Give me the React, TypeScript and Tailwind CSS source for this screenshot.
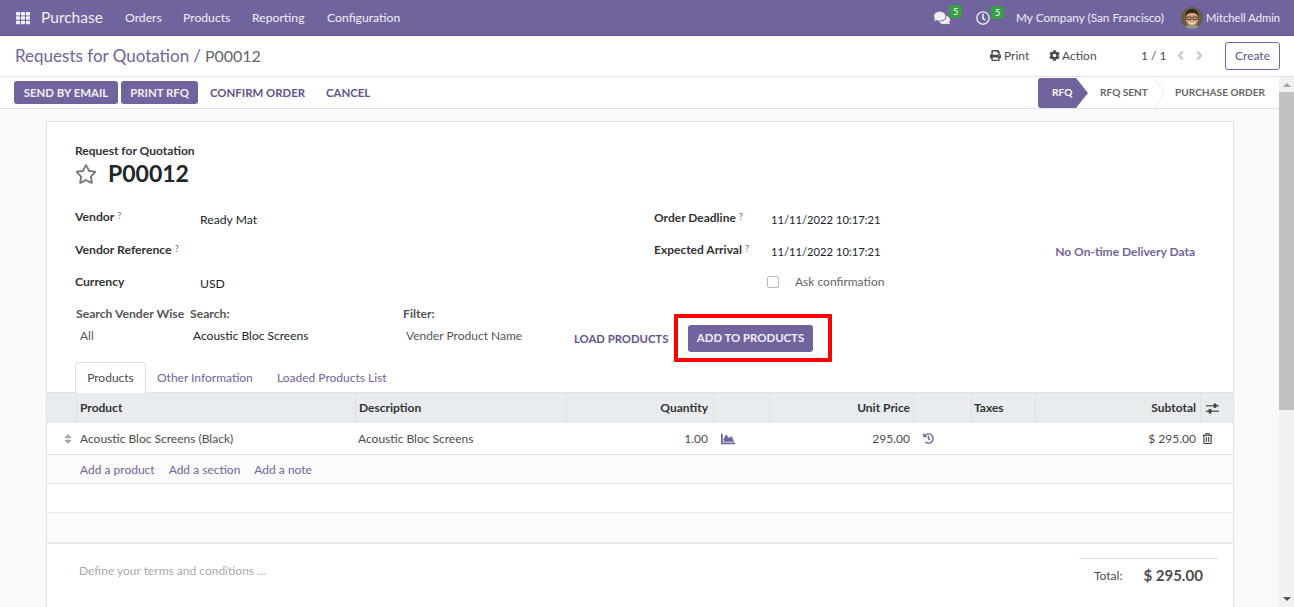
import { FaAngleLeft, FaAngleRight, FaChartArea, FaCog, FaComments, FaHistory, FaPrint, FaRegClock, FaRegStar, FaRegTrashAlt, FaSort, FaTh } from 'react-icons/fa'

const tableCols = 'grid grid-cols-[29px_279px_211px_147px_56px_144px_58px_64px_165px_33px]'

function Help() {
  return <sup className="ml-[3px] text-[9px] font-normal text-[#71639e] relative -top-[2px]">?</sup>
}

function Badge() {
  return (
    <span className="absolute -top-[5px] left-[15px] bg-[#3a9e46] text-white rounded-[2px] text-[9px] leading-[13px] w-[13px] text-center">5</span>
  )
}

function Avatar() {
  return (
    <svg width="22" height="22" viewBox="0 0 22 22" className="rounded-full">
      <rect width="22" height="22" fill="#6b5a45" />
      <ellipse cx="11" cy="12" rx="6" ry="7" fill="#d6a27c" />
      <path d="M4 10c0-6 4-8 7-8s7 2 7 8c-1-3-3-4-7-4s-6 1-7 4z" fill="#33261d" />
      <rect x="6" y="10" width="4" height="2.5" fill="none" stroke="#2a211c" strokeWidth="0.7" />
      <rect x="12" y="10" width="4" height="2.5" fill="none" stroke="#2a211c" strokeWidth="0.7" />
      <path d="M8 15.5c2 1.5 4 1.5 6 0" stroke="#fff" strokeWidth="1" fill="none" />
      <path d="M2 22c1-3 4-4 9-4s8 1 9 4z" fill="#8c9a8c" />
    </svg>
  )
}

function Chevron() {
  return (
    <svg width="10" height="30" viewBox="0 0 10 30" className="shrink-0">
      <path d="M0 0l9 15L0 30" fill="none" stroke="#e9ecef" />
    </svg>
  )
}

function Sliders() {
  return (
    <svg width="13" height="11" viewBox="0 0 13 11" fill="#444">
      <rect x="0" y="2.2" width="13" height="1.2" />
      <rect x="7.5" y="0.5" width="3" height="4.5" rx="1" />
      <rect x="0" y="7.6" width="13" height="1.2" />
      <rect x="2.5" y="6" width="3" height="4.5" rx="1" />
    </svg>
  )
}

export default function App() {
  return (
    <div className="w-[1294px] h-[607px] overflow-hidden flex flex-col bg-white text-[12px] text-[#4c4c4c] font-['Lato',sans-serif]">
      <nav className="h-9 shrink-0 bg-[#71639e] border-b border-[#645890] text-white/90 text-[12.2px] flex items-center pl-[16px] pr-[16px] pt-[1px]">
        <FaTh className="text-[14px] text-white/90" />
        <span className="ml-[11px] text-[15.5px] w-[62px]">Purchase</span>
        <span className="ml-[22px] w-[36px]">Orders</span>
        <span className="ml-[22px] w-[47px]">Products</span>
        <span className="ml-[22px] w-[53px]">Reporting</span>
        <span className="ml-[22px]">Configuration</span>
        <div className="ml-auto flex items-center">
          <span className="relative mr-[26px]"><FaComments className="text-[16px]" /><Badge /></span>
          <span className="relative mr-[26px]"><FaRegClock className="text-[14px]" /><Badge /></span>
          <span className="w-[148px] mr-[17px] whitespace-nowrap text-[11.8px]">My Company (San Francisco)</span>
          <Avatar />
          <span className="ml-[3px] w-[72px] whitespace-nowrap text-[11.2px]">Mitchell Admin</span>
        </div>
      </nav>

      <div className="h-[41px] shrink-0 border-b border-[#dee2e6] flex items-center pl-[15px] pr-[14px]">
        <span className="text-[17px] text-[#71639e]">Requests for Quotation</span>
        <span className="text-[17px] text-[#71639e] ml-[4px]">/</span>
        <span className="text-[16px] text-[#666] ml-[4px]">P00012</span>
        <div className="ml-auto -mt-[1px] flex items-center">
          <FaPrint className="text-[11px] mr-[3px]" />
          <span className="w-[27px]">Print</span>
          <FaCog className="text-[11px] ml-[18px] mr-[2px]" />
          <span className="w-[35px]">Action</span>
          <span className="ml-[44px] w-[22px] whitespace-nowrap">1 / 1</span>
          <FaAngleLeft className="ml-[10px] text-[15px] text-[#ccc]" />
          <FaAngleRight className="ml-[4px] text-[15px] text-[#ccc]" />
          <button className="ml-[18px] w-[55px] h-[28px] rounded-[3px] border border-[#71639e] text-[#5f5390]">Create</button>
        </div>
      </div>

      <div className="flex-1 min-h-0 flex">
        <div className="flex-1 min-w-0 flex flex-col">
          <div className="h-[32px] shrink-0 border-b border-[#dee2e6] flex items-center pl-[14px] pr-[14px]">
            <button className="h-[23px] w-[104px] bg-[#71639e] text-white/90 rounded-[3px] font-bold text-[11.4px]">SEND BY EMAIL</button>
            <button className="h-[23px] w-[77px] ml-[3px] bg-[#71639e] text-white/90 rounded-[3px] font-bold text-[11.4px]">PRINT RFQ</button>
            <span className="ml-[12px] w-[95px] text-[#5f5390] font-bold text-[11.4px] whitespace-nowrap">CONFIRM ORDER</span>
            <span className="ml-[21px] text-[#5f5390] font-bold text-[11.4px]">CANCEL</span>
            <div className="ml-auto flex items-center text-[10.1px] text-[#666] font-bold h-[30px] -mb-[1px]">
              <span className="w-[50px] h-[30px] bg-[#71639e] text-white flex items-center pl-[14px] rounded-l-[3px] [clip-path:polygon(0_0,38px_0,50px_50%,38px_100%,0_100%)]">RFQ</span>
              <span className="ml-[12px] w-[48px] whitespace-nowrap">RFQ SENT</span>
              <span className="ml-[7px]"><Chevron /></span>
              <span className="ml-[10px] w-[90px] whitespace-nowrap">PURCHASE ORDER</span>
            </div>
          </div>

          <main className="flex-1 min-h-0 bg-[#f8f9fb] overflow-hidden pt-[12px] pl-[46px]">
            <div className="w-[1188px] h-[600px] bg-white border border-[#dee2e6] pt-[21px]">
              <div className="pl-[28px] pr-[38px]">
                <div className="text-[12px] font-bold text-[#333] leading-[15px]">Request for Quotation</div>
                <div className="flex items-center h-[31px]">
                  <FaRegStar className="text-[22px] text-[#777]" />
                  <span className="ml-[11px] text-[23px] font-bold text-[#212529]">P00012</span>
                </div>

                <div className="mt-[15px] grid grid-cols-[125px_454px_117px_1fr] auto-rows-[32px] items-center text-[12.2px] text-[#212529]">
                  <span className="font-bold text-[#333] -mt-[5px]">Vendor<Help /></span>
                  <span>Ready Mat</span>
                  <span className="font-bold text-[#333] -mt-[5px] text-[12px]">Order Deadline<Help /></span>
                  <span className="text-[11.2px]">11/11/2022 10:17:21</span>
                  <span className="font-bold text-[#333] -mt-[3px] whitespace-nowrap">Vendor Reference<Help /></span>
                  <span />
                  <span className="font-bold text-[#333] -mt-[5px] text-[12px] whitespace-nowrap">Expected Arrival<Help /></span>
                  <div className="flex justify-between items-center">
                    <span className="text-[11.2px]">11/11/2022 10:17:21</span>
                    <span className="font-bold text-[#71639e] text-[12px]">No On-time Delivery Data</span>
                  </div>
                  <span className="font-bold text-[#333] -mt-[3px]">Currency</span>
                  <span>USD</span>
                  <span />
                  <label className="flex items-center -mt-[4px] text-[#666] text-[12px]">
                    <span className="w-[12px] h-[12px] rounded-[2px] border border-[#bbb] -ml-[4px]" />
                    <span className="ml-[16px]">Ask confirmation</span>
                  </label>
                </div>

                <div className="mt-[6px] ml-[1px] flex items-start h-[56px]">
                  <div className="w-[114px]">
                    <div className="font-bold text-[12.2px] text-[#555] leading-[16px] whitespace-nowrap">Search Vender Wise</div>
                    <div className="ml-[4px] mt-[6px] leading-[16px] text-[#555]">All</div>
                  </div>
                  <div className="w-[213px]">
                    <div className="font-bold text-[12.2px] text-[#555] leading-[16px]">Search:</div>
                    <div className="ml-[3px] mt-[6px] leading-[16px] text-[#212529]">Acoustic Bloc Screens</div>
                  </div>
                  <div className="w-[171px]">
                    <div className="font-bold text-[12.2px] text-[#555] leading-[16px]">Filter:</div>
                    <div className="ml-[3px] mt-[6px] leading-[16px] text-[#555]">Vender Product Name</div>
                  </div>
                  <span className="w-[95px] mt-[25px] leading-[16px] text-[#5f5390] font-bold text-[11.3px] whitespace-nowrap">LOAD PRODUCTS</span>
                  <div className="ml-[5px] mt-[8px] w-[158px] h-[48px] border-4 border-[#ff0000] rounded-[1px] flex items-center justify-center">
                    <button className="w-[125px] h-[27px] -ml-[5px] bg-[#71639e] text-white/90 rounded-[3px] font-bold text-[11.4px]">ADD TO PRODUCTS</button>
                  </div>
                </div>

                <div className="flex h-[30px] relative z-10 items-stretch">
                  <span className="w-[71px] h-[31px] bg-white border border-b-0 border-[#dee2e6] rounded-t-[3px] flex items-center justify-center">Products</span>
                  <span className="ml-[11px] w-[98px] pt-[2px] whitespace-nowrap text-[#71639e] flex items-center">Other Information</span>
                  <span className="ml-[22px] pt-[2px] text-[#71639e] flex items-center">Loaded Products List</span>
                </div>
              </div>

              <div className={`${tableCols} h-[31px] bg-[#e9ecef] border-t border-[#dee2e6] items-stretch font-bold text-[#333]`}>
                <span />
                <span className="border-l border-[#dee2e6] pl-[3px] flex items-center">Product</span>
                <span className="border-l border-[#dee2e6] pl-[3px] flex items-center">Description</span>
                <span className="border-l border-[#dee2e6] pr-[5px] flex items-center justify-end">Quantity</span>
                <span className="border-l border-[#dee2e6]" />
                <span className="border-l border-[#dee2e6] pr-[3px] flex items-center justify-end">Unit Price</span>
                <span className="border-l border-[#dee2e6]" />
                <span className="border-l border-[#dee2e6] pl-[2px] flex items-center">Taxes</span>
                <span className="border-l border-[#dee2e6] pr-[4px] flex items-center justify-end">Subtotal</span>
                <span className="border-l border-[#dee2e6] pl-[5px] flex items-center"><Sliders /></span>
              </div>
              <div className={`${tableCols} h-[32px] border-b border-[#dee2e6] items-center`}>
                <FaSort className="ml-[15px] text-[12px] text-[#aaa]" />
                <span className="pl-[4px]">Acoustic Bloc Screens (Black)</span>
                <span className="pl-[3px]">Acoustic Bloc Screens</span>
                <span className="pr-[5px] text-right">1.00</span>
                <FaChartArea className="ml-[8px] text-[14px] text-[#71639e]" />
                <span className="pr-[3px] text-right">295.00</span>
                <FaHistory className="ml-[10px] text-[11px] text-[#71639e]" />
                <span />
                <span className="pr-[4px] text-right">$ 295.00</span>
                <FaRegTrashAlt className="ml-[2px] text-[11px] text-[#333]" />
              </div>
              <div className="h-[29px] bg-[#fbfbfb] border-b border-[#e5e7eb] pl-[33px] pt-[2px] flex items-center gap-[14px] text-[#71639e]">
                <span>Add a product</span>
                <span>Add a section</span>
                <span>Add a note</span>
              </div>
              <div className="h-[29px] border-b border-[#e5e7eb]" />
              <div className="h-[31px] bg-[#fbfbfb] border-b-2 border-[#e5e7eb]" />

              <div className="flex">
                <span className="ml-[32px] mt-[19px] text-[12px] leading-[16px] text-[#aaa]">Define your terms and conditions ...</span>
                <div className="ml-auto mr-[15px] mt-[14px] w-[139px] border-t border-[#dee2e6] flex items-center h-[34px] pl-[15px]">
                  <span>Total:</span>
                  <span className="ml-[21px] text-[15px] font-bold text-[#4c4c4c]">$ 295.00</span>
                </div>
              </div>
            </div>
          </main>
        </div>
        <div className="w-[15px] shrink-0 bg-[#f1f1f1] flex flex-col items-center">
          <span className="mt-[6px] w-0 h-0 border-x-[4px] border-x-transparent border-b-[4px] border-b-[#a3a3a3]" />
          <span className="mt-[5px] w-full h-[318px] bg-[#c1c1c1]" />
          <span className="mt-auto mb-[6px] w-0 h-0 border-x-[4px] border-x-transparent border-t-[4px] border-t-[#505050]" />
        </div>
      </div>
    </div>
  )
}
